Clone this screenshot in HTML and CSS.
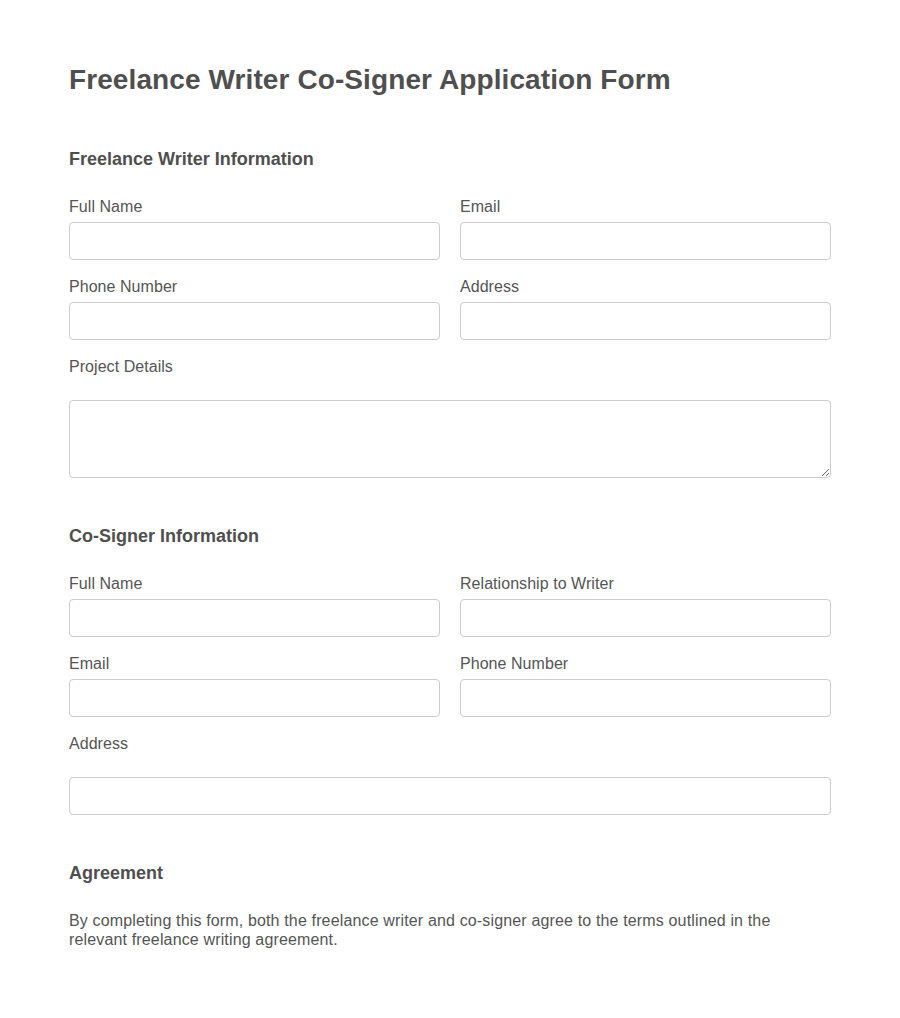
FILE: index.html
```html
<!DOCTYPE html>
<html lang="en">
<head>
<meta charset="utf-8">
<title>Freelance Writer Co-Signer Application Form</title>
<link rel="stylesheet" href="styles.css">
</head>
<body>
<form class="form">
  <h1 class="title">Freelance Writer Co-Signer Application Form</h1>

  <section class="section">
    <h2 class="section-title">Freelance Writer Information</h2>
    <div class="grid">
      <div class="field">
        <label class="label">Full Name</label>
        <input class="input" type="text">
      </div>
      <div class="field">
        <label class="label">Email</label>
        <input class="input" type="email">
      </div>
      <div class="field">
        <label class="label">Phone Number</label>
        <input class="input" type="tel">
      </div>
      <div class="field">
        <label class="label">Address</label>
        <input class="input" type="text">
      </div>
      <div class="field field-full">
        <label class="label">Project Details</label>
        <textarea class="input textarea"></textarea>
      </div>
    </div>
  </section>

  <section class="section">
    <h2 class="section-title">Co-Signer Information</h2>
    <div class="grid">
      <div class="field">
        <label class="label">Full Name</label>
        <input class="input" type="text">
      </div>
      <div class="field">
        <label class="label">Relationship to Writer</label>
        <input class="input" type="text">
      </div>
      <div class="field">
        <label class="label">Email</label>
        <input class="input" type="email">
      </div>
      <div class="field">
        <label class="label">Phone Number</label>
        <input class="input" type="tel">
      </div>
      <div class="field field-full">
        <label class="label">Address</label>
        <input class="input" type="text">
      </div>
    </div>
  </section>

  <section class="section">
    <h2 class="section-title">Agreement</h2>
    <p class="text">By completing this form, both the freelance writer and co-signer agree to the terms outlined in the relevant freelance writing agreement.</p>
  </section>
</form>
</body>
</html>
```

FILE: styles.css
```css
* { box-sizing: border-box; }

body {
  margin: 0;
  padding-top: 64px;
  background: #ffffff;
  font-family: "Liberation Sans", Arial, sans-serif;
  color: #555555;
}

.form {
  width: 762px;
  margin: 0 auto;
}

.title {
  margin: 0 0 53px;
  font-size: 28px;
  line-height: 32px;
  font-weight: bold;
  letter-spacing: 0.1px;
  color: #4f4f4f;
}

.section {
  margin-bottom: 48px;
}

.section-title {
  margin: 0 0 27px;
  font-size: 18px;
  line-height: 21px;
  font-weight: bold;
  color: #4f4f4f;
}

.grid {
  display: grid;
  grid-template-columns: 1fr 1fr;
  column-gap: 20px;
  row-gap: 17px;
}

.field {
  display: flex;
  flex-direction: column;
  gap: 6px;
}

.field-full {
  grid-column: 1 / -1;
  gap: 24px;
}

.label {
  font-size: 16px;
  line-height: 19px;
  letter-spacing: 0.05px;
  color: #555555;
}

.input {
  display: block;
  width: 100%;
  height: 38px;
  margin: 0;
  padding: 8px 10px;
  border: 1px solid #cccccc;
  border-radius: 4px;
  background: #ffffff;
  font-family: inherit;
  font-size: 16px;
}

.textarea {
  height: 78px;
  resize: vertical;
}

.text {
  margin: 0;
  font-size: 16px;
  line-height: 19px;
  letter-spacing: 0.15px;
  color: #555555;
}
```
